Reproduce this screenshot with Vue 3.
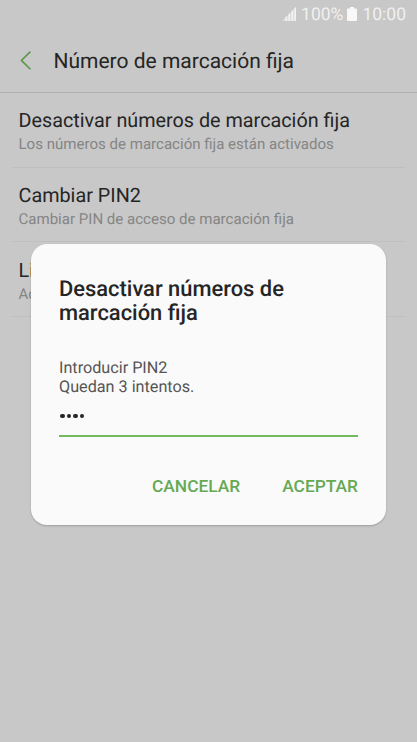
<script setup>
const items = [
  { title: 'Desactivar números de marcación fija', note: 'Los números de marcación fija están activados' },
  { title: 'Cambiar PIN2', note: 'Cambiar PIN de acceso de marcación fija' },
  { title: 'Li', note: 'Ac' }
]
</script>

<template>
  <div class="screen">
    <div class="status">
      <svg class="signal" width="14" height="14" viewBox="0 0 14 14">
        <path d="M0 14L14 0V14Z" fill="#dcdcdc" />
        <path d="M3.4 14V10.6L5 9V14ZM6.4 14V7.6L8 6V14ZM9.4 14V4.6L11 3V14ZM12.3 14V1.7L14 0V14Z" fill="#f2f2f2" />
      </svg>
      <span class="percent">100%</span>
      <svg class="battery" width="10" height="14" viewBox="0 0 10 14">
        <path d="M3 0H7V1.5H9.2Q10 1.5 10 2.3V13.2Q10 14 9.2 14H.8Q0 14 0 13.2V2.3Q0 1.5 .8 1.5H3Z" fill="#f8f8f8" />
      </svg>
      <span class="clock">10:00</span>
    </div>
    <header class="bar">
      <svg class="back" width="12" height="20" viewBox="0 0 12 20">
        <path d="M10.4 .6L1.4 9.4L10.4 18.2" fill="none" stroke="#5b984c" stroke-width="1.6" />
      </svg>
      <h1>Número de marcación fija</h1>
    </header>
    <ul class="list">
      <li v-for="item in items" :key="item.title">
        <div class="item-title">{{ item.title }}</div>
        <div class="note">{{ item.note }}</div>
      </li>
    </ul>
    <div class="dialog">
      <h2>Desactivar números de<br />marcación fija</h2>
      <p>Introducir PIN2<br />Quedan 3 intentos.</p>
      <div class="field">
        <i v-for="n in 4" :key="n"></i>
      </div>
      <div class="actions">
        <button>CANCELAR</button>
        <button>ACEPTAR</button>
      </div>
    </div>
  </div>
</template>

<style>
body {
  margin: 0;
  background: #c8c8c8;
}
</style>

<style scoped>
.screen {
  position: relative;
  width: 417px;
  height: 742px;
  overflow: hidden;
  background: #c8c8c8;
  font-family: Roboto, "Liberation Sans", sans-serif;
  text-rendering: geometricPrecision;
  color: #252525;
}
.status {
  display: flex;
  height: 30px;
  box-sizing: border-box;
  padding: 7px 11px 0 0;
  justify-content: flex-end;
  align-items: flex-start;
  font-size: 17.5px;
  line-height: 17px;
  color: #f0f0f0;
}
.signal { margin-right: 5px; }
.battery { margin: 0 5px 0 4px; }
.bar {
  display: flex;
  align-items: center;
  height: 63px;
  box-sizing: border-box;
  padding-left: 20px;
  border-bottom: 1px solid #b0b0b0;
}
.back { margin-right: 21.5px; }
h1 {
  margin: 0;
  padding-top: 2px;
  font-size: 21px;
  font-weight: 400;
  line-height: 24px;
}
.list {
  list-style: none;
  margin: 0 12px;
  padding: 0;
}
.list li {
  height: 74.7px;
  box-sizing: border-box;
  padding: 16.2px 0 0 6.5px;
  border-bottom: 1px solid #bfbfbf;
  white-space: nowrap;
}
.item-title {
  font-size: 19.8px;
  line-height: 24px;
}
.note {
  font-size: 15.05px;
  line-height: 18px;
  padding-top: 2px;
  color: #858585;
}
.dialog {
  position: absolute;
  left: 31px;
  top: 244px;
  width: 355px;
  height: 281px;
  box-sizing: border-box;
  padding: 33.5px 28px 0;
  border-radius: 16px;
  background: #fafafa;
  box-shadow: 0 1px 2px rgba(0, 0, 0, 0.22);
}
h2 {
  margin: 0;
  font-size: 21.9px;
  font-weight: 500;
  line-height: 24.5px;
}
p {
  margin: 31.5px 0 0;
  font-size: 16.2px;
  line-height: 19px;
  color: #555;
}
.field {
  display: flex;
  gap: 2px;
  height: 41px;
  box-sizing: border-box;
  padding: 17.5px 0 0 1px;
  border-bottom: 2px solid #72b85e;
}
.field i {
  width: 4.5px;
  height: 4.5px;
  border-radius: 50%;
  background: #252525;
}
.actions {
  display: flex;
  justify-content: flex-end;
  gap: 42px;
  padding-top: 39px;
}
button {
  padding: 0;
  border: 0;
  background: none;
  font: 500 17.35px/20px Roboto, "Liberation Sans", sans-serif;
  color: #65a954;
}
</style>
